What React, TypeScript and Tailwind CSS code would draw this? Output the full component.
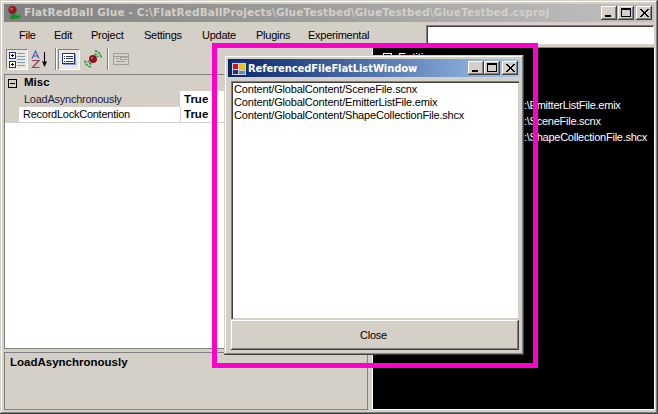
const raised = "shadow-[inset_-1px_-1px_0_#404040,inset_1px_1px_0_#ffffff,inset_-2px_-2px_0_#808080,inset_2px_2px_0_#d4d0c8]";

function CapButton({ kind, className = "" }: { kind: "min" | "max" | "close"; className?: string }) {
  return (
    <div className={`w-[16px] h-[14px] bg-[#d4d0c8] ${raised} ${className}`}>
      <svg width="16" height="14" viewBox="0 0 16 14" shapeRendering="crispEdges">
        {kind === "min" && <rect x="4" y="9" width="6" height="2" fill="#000" />}
        {kind === "max" && <path d="M3.5 3.5h9v7h-9z M3 2.5h10" fill="none" stroke="#000" />}
        {kind === "close" && <path d="M4 3l8 8M5 3l8 8M12 3l-8 8M13 3l-8 8" stroke="#000" fill="none" shapeRendering="auto" />}
      </svg>
    </div>
  );
}

function GlueIcon() {
  return (
    <svg width="16" height="16" viewBox="0 0 16 16">
      <circle cx="5.5" cy="5" r="4.2" fill="#8c1c20" />
      <circle cx="4.5" cy="3.8" r="1.4" fill="#cc5a5a" />
      <ellipse cx="8.5" cy="11.5" rx="5.5" ry="2.2" fill="#1f8a2c" />
      <circle cx="5" cy="12.5" r="2" fill="#1f8a2c" />
      <circle cx="10.5" cy="9.5" r="1.6" fill="#35a844" />
    </svg>
  );
}

function CategorizedIcon() {
  return (
    <svg width="20" height="19" viewBox="0 0 20 19" shapeRendering="crispEdges">
      <g fill="#fff" stroke="#28386c"><rect x="2.5" y="2.5" width="6" height="6" /><rect x="2.5" y="11.5" width="6" height="6" /></g>
      <path d="M4 5.5h3M5.5 4v3M4 14.5h3M5.5 13v3" stroke="#000" />
      <path d="M10 3.5h8M10 6.5h8M10 9.5h8M10 12.5h8M10 15.5h8" stroke="#7e98b4" />
    </svg>
  );
}

function SortIcon() {
  return (
    <svg width="20" height="20" viewBox="0 0 20 20">
      <path d="M2 9.5 L5.5 2 L9 9.5 M3.4 7h4.2" fill="none" stroke="#4258b8" strokeWidth="1.1" />
      <path d="M2 11.5h7L2.5 18.5H9.5" fill="none" stroke="#a04050" strokeWidth="1.2" />
      <path d="M14.5 3v11" stroke="#000" strokeWidth="1.1" />
      <path d="M12 12.5h5l-2.5 5.5z" fill="#000" />
    </svg>
  );
}

function PropsIcon() {
  return (
    <svg width="16" height="16" viewBox="0 0 16 16" shapeRendering="crispEdges">
      <rect x="1.5" y="2.5" width="12" height="10" fill="#fff" stroke="#24357a" />
      <path d="M14.5 3v10.5H2" fill="none" stroke="#8a98c8" />
      <path d="M3 5h1M3 7.5h1M3 10h1" stroke="#24357a" />
      <path d="M5 5h7M5 7.5h7M5 10h7" stroke="#24357a" />
    </svg>
  );
}

function EventsIcon() {
  return (
    <svg width="22" height="22" viewBox="0 0 22 22">
      <circle cx="11" cy="11" r="4" fill="#8c1420" />
      <circle cx="10" cy="10" r="1.2" fill="#c85a60" />
      <path d="M13 3 Q18.5 4 19 9.5 M12.5 6 Q15.5 6.5 16 9" fill="none" stroke="#1d9a30" strokeWidth="1.6" strokeDasharray="2.5 1" />
      <path d="M9 19 Q3.5 18 3 12.5 M9.5 16 Q6.5 15.5 6 13" fill="none" stroke="#1d9a30" strokeWidth="1.6" strokeDasharray="2.5 1" />
    </svg>
  );
}

function PagesIcon() {
  return (
    <svg width="16" height="16" viewBox="0 0 16 16" shapeRendering="crispEdges">
      <rect x="0.5" y="2.5" width="15" height="11" fill="#d4d0c8" stroke="#a0a09a" />
      <path d="M1 5h14" stroke="#a0a09a" />
      <path d="M3 7.5h3M3 10.5h9" stroke="#a0a09a" />
      <rect x="7.5" y="6.5" width="6" height="2" fill="#e8e6e0" stroke="#a0a09a" />
    </svg>
  );
}

function FormIcon() {
  return (
    <svg width="14" height="14" viewBox="0 0 14 14" shapeRendering="crispEdges">
      <rect x="0" y="0" width="14" height="14" fill="#d4d0c8" />
      <rect x="0" y="0" width="14" height="2" fill="#1c2f8c" />
      <rect x="1" y="3" width="5" height="5" fill="#c81818" />
      <rect x="1" y="9" width="5" height="4" fill="#1c2f8c" />
      <rect x="7" y="3" width="6" height="6" fill="#f0c020" />
      <rect x="7" y="10" width="6" height="3" fill="#4a90d8" />
    </svg>
  );
}

const menu = [
  { t: "File", w: "w-[35px]" },
  { t: "Edit", w: "w-[37px]" },
  { t: "Project", w: "w-[53px]" },
  { t: "Settings", w: "w-[58px]" },
  { t: "Update", w: "w-[54px]" },
  { t: "Plugins", w: "w-[52px]" },
  { t: "Experimental", w: "w-[90px]" },
];

export default function App() {
  return (
    <div
      className="relative w-[658px] h-[414px] overflow-hidden bg-[#d4d0c8] text-[11px] tracking-[-0.25px] text-black shadow-[inset_-1px_-1px_0_#404040,inset_1px_1px_0_#d4d0c8,inset_-2px_-2px_0_#808080,inset_2px_2px_0_#fff]"
      style={{ fontFamily: '"Liberation Sans", Arial, sans-serif' }}
    >
      <div className="flex flex-col h-full p-[4px]">
        {/* Title bar */}
        <div className="h-[18px] flex items-center bg-gradient-to-r from-[#808080] to-[#c0c0c0] shrink-0">
          <div className="w-[20px] pl-[3px] shrink-0"><GlueIcon /></div>
          <div className="flex-1 font-bold text-[10.5px] tracking-[0.15px] text-[#d4d0c8] whitespace-nowrap" style={{ fontFamily: '"DejaVu Sans", sans-serif' }}>
            {"FlatRedBall Glue - C:\\FlatRedBallProjects\\GlueTestbed\\GlueTestbed\\GlueTestbed.csproj"}
          </div>
          <div className="flex items-center pr-[2px]">
            <CapButton kind="min" />
            <CapButton kind="max" className="ml-[1px]" />
            <CapButton kind="close" className="ml-[2px]" />
          </div>
        </div>

        {/* Menu */}
        <div className="h-[24px] flex items-center shrink-0 relative">
          <div className="flex pl-[15px] flex-1 pt-[2px]">
            {menu.map((m) => (
              <span key={m.t} className={m.w}>{m.t}</span>
            ))}
          </div>
          <div className="w-[228px] h-[19px] bg-white shadow-[inset_1px_1px_0_#808080,inset_-1px_-1px_0_#fff,inset_2px_2px_0_#404040]" />
        </div>

        <div className="flex-1 flex min-h-0">
          {/* Left column */}
          <div className="w-[364px] flex flex-col shrink-0">
            {/* Toolbar */}
            <div className="h-[26px] flex items-center pl-[2px] shrink-0">
              <div className="w-[22px] h-[21px] flex items-center justify-center bg-[#ebe9e4] border border-t-[#808080] border-l-[#808080] border-r-white border-b-white"><CategorizedIcon /></div>
              <div className="ml-[2px] w-[20px] h-[21px] flex items-center justify-center"><SortIcon /></div>
              <div className="w-px h-[22px] bg-[#808080] ml-[5px] shadow-[1px_0_0_#fff]" />
              <div className="ml-[2px] w-[22px] h-[21px] flex items-center justify-center bg-[#ebe9e4] border border-t-[#808080] border-l-[#808080] border-r-white border-b-white"><PropsIcon /></div>
              <div className="ml-[2px] w-[22px] h-[21px] flex items-center justify-center"><EventsIcon /></div>
              <div className="w-px h-[22px] bg-[#808080] ml-[3px] shadow-[1px_0_0_#fff]" />
              <div className="ml-[4px] w-[18px] h-[21px] flex items-center justify-center"><PagesIcon /></div>
            </div>

            {/* Property grid */}
            <div className="h-[275px] mt-[2px] bg-white border border-[#808080] shrink-0">
              <div className="h-[16px] flex items-center bg-[#d4d0c8]">
                <div className="w-[9px] h-[9px] ml-[3px] border border-black relative flex items-center justify-center"><div className="w-[5px] h-px bg-black" /></div>
                <span className="ml-[7px] font-bold text-[11.5px] tracking-normal">Misc</span>
              </div>
              <div className="h-[16px] flex items-center bg-[#d4d0c8]">
                <span className="w-[175px] pl-[19px] text-[#1c1c3c] whitespace-nowrap shrink-0">LoadAsynchronously</span>
                <span className="flex-1 h-full bg-white pl-[4px] font-bold text-[11.5px] tracking-normal leading-[16px]">True</span>
              </div>
              <div className="h-[16px] flex items-center border-b border-[#d4d0c8]">
                <div className="w-[14px] self-stretch bg-[#d4d0c8] shrink-0" />
                <span className="w-[161px] whitespace-nowrap shrink-0 pl-[4px]">RecordLockContention</span>
                <span className="flex-1 h-full border-l border-[#d4d0c8] pl-[3px] font-bold text-[11.5px] tracking-normal leading-[15px]">True</span>
              </div>
            </div>

            {/* Help box */}
            <div className="flex-1 mt-[3px] border border-[#808080] pl-[5px] pt-[2px] font-bold text-[11.5px] tracking-normal leading-[14px]">LoadAsynchronously</div>
          </div>

          {/* Right panel */}
          <div className="flex-1 ml-[5px] mt-[2px] mb-[1px] bg-black text-white shadow-[-1px_0_0_#fff,0_1px_0_#fff,1px_0_0_#fff,0_-1px_0_#808080]">
            <div className="pl-[10px] pt-[3px] h-[16px] flex items-center">
              <div className="w-[9px] h-[9px] border border-white shrink-0" />
              <span className="ml-[6px] text-[12px]">Entities</span>
            </div>
            <div className="pt-[33px] pl-[151px] leading-[16px] whitespace-nowrap">
              <div>{":\\EmitterListFile.emix"}</div>
              <div>{":\\SceneFile.scnx"}</div>
              <div>{":\\ShapeCollectionFile.shcx"}</div>
            </div>
          </div>
        </div>
      </div>

      {/* Dialog */}
      <div className="absolute left-[224px] top-[55px] w-[300px] h-[300px] bg-[#d4d0c8] p-[4px] flex flex-col shadow-[inset_-1px_-1px_0_#404040,inset_1px_1px_0_#d4d0c8,inset_-2px_-2px_0_#808080,inset_2px_2px_0_#fff]">
        <div className="h-[18px] flex items-center bg-gradient-to-r from-[#0a246a] to-[#a6caf0] shrink-0">
          <div className="pl-[4px] w-[20px] shrink-0"><FormIcon /></div>
          <div className="flex-1 text-white font-bold text-[10px] tracking-[-0.1px] whitespace-nowrap" style={{ fontFamily: '"DejaVu Sans", sans-serif' }}>ReferencedFileFlatListWindow</div>
          <div className="flex items-center pr-[2px]">
            <CapButton kind="min" />
            <CapButton kind="max" />
            <CapButton kind="close" className="ml-[2px]" />
          </div>
        </div>
        <div className="mt-[4px] ml-[3px] mr-[1px] h-[238px] bg-white pl-[3px] pt-[2px] leading-[13px] tracking-[-0.18px] shadow-[inset_1px_1px_0_#808080,inset_2px_2px_0_#404040,inset_-1px_-1px_0_#d4d0c8] whitespace-nowrap shrink-0">
          <div>Content/GlobalContent/SceneFile.scnx</div>
          <div>Content/GlobalContent/EmitterListFile.emix</div>
          <div>Content/GlobalContent/ShapeCollectionFile.shcx</div>
        </div>
        <div className={`mt-[1px] ml-[3px] mr-[1px] h-[30px] pr-[3px] flex items-center justify-center ${raised}`}>Close</div>
      </div>

      {/* Annotation */}
      <div className="absolute left-[212px] top-[43px] w-[326px] h-[325px] border-[5px] border-[#ff00cc] pointer-events-none" />
    </div>
  );
}
